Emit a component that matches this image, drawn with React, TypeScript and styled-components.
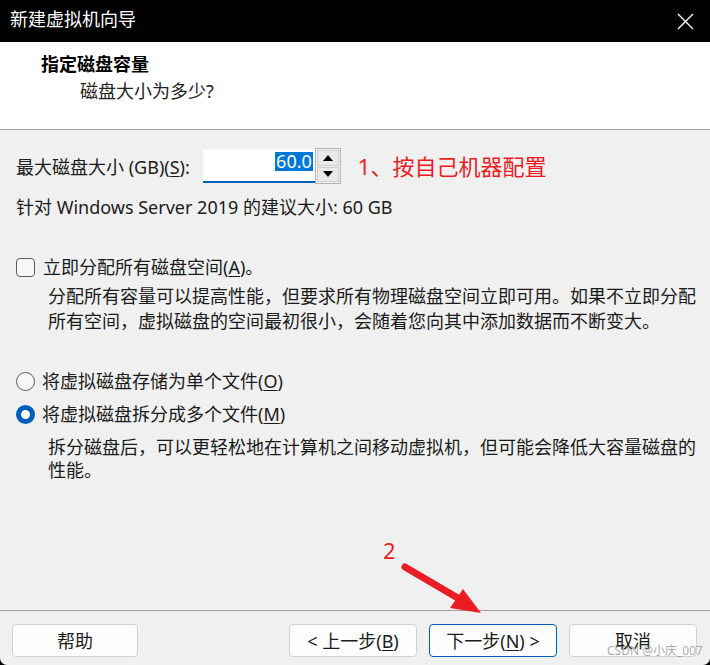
import React from "react";
import styled, { createGlobalStyle } from "styled-components";

const Global = createGlobalStyle`
  html, body { margin: 0; padding: 0; background: #000; }
  body { font-family: "Noto Sans", "Noto Sans CJK SC", sans-serif; }
`;

const FONT = `"Noto Sans", "Noto Sans CJK SC", sans-serif`;

const Window = styled.div`
  position: relative;
  width: 710px;
  height: 665px;
  background: #f0f0f0;
  border-radius: 0 0 7px 7px;
  overflow: hidden;
  display: flex;
  flex-direction: column;
  font-family: ${FONT};
  color: #1b1b1b;
`;

const TitleBar = styled.div`
  height: 42px;
  background: #000;
  display: flex;
  align-items: center;
  justify-content: space-between;
  padding: 0 16px 0 10px;
  box-sizing: border-box;
`;

const Title = styled.span`
  color: #fff;
  font-size: 18px;
  line-height: 22px;
  margin-top: -4px;
`;

const Header = styled.div`
  height: 88px;
  background: #fff;
  border-bottom: 1px solid #a0a0a0;
  padding: 11px 0 0 41px;
  box-sizing: border-box;
`;

const HeaderTitle = styled.div`
  font-size: 18px;
  font-weight: 700;
  line-height: 22px;
  color: #000;
`;

const HeaderSub = styled.div`
  font-size: 18px;
  line-height: 22px;
  margin: 5px 0 0 39px;
  color: #222;
`;

const Content = styled.div`
  flex: 1;
  padding: 19px 0 0 16px;
  display: flex;
  flex-direction: column;
`;

const SizeRow = styled.div`
  height: 35px;
  display: flex;
  align-items: center;
`;

const Label = styled.span`
  font-size: 18px;
  line-height: 22px;
`;

const Spin = styled.div`
  display: flex;
  margin-left: 13px;
  height: 35px;
`;

const Input = styled.div`
  width: 112px;
  height: 34px;
  box-sizing: border-box;
  background: #fff;
  border-bottom: 2px solid #005fb8;
  display: flex;
  justify-content: flex-end;
  align-items: flex-start;
  padding: 3px 2px 0 0;
`;

const Selected = styled.span`
  background: #0078d7;
  color: #fff;
  font-size: 18px;
  line-height: 19px;
  padding: 0 1px;
`;

const SpinButtons = styled.div`
  width: 26px;
  height: 36px;
  margin-top: -1px;
  box-sizing: border-box;
  border: 1px solid #b4b4b4;
  display: flex;
  flex-direction: column;
  gap: 1px;
  padding: 1px;
  background: #f0f0f0;
`;

const SpinBtn = styled.div`
  flex: 1;
  background: #e9e9e9;
  border: 1px solid #cfcfcf;
  display: flex;
  align-items: center;
  justify-content: center;
`;

const Note = styled.span`
  color: #ea1c24;
  font-size: 22px;
  line-height: 26px;
  margin-left: 17px;
  margin-top: -2px;
`;

const Recommend = styled.div`
  font-size: 18px;
  line-height: 22px;
  margin-top: 12px;
`;

const OptionRow = styled.div<{ $mt: number }>`
  display: flex;
  align-items: center;
  margin-top: ${(p) => p.$mt}px;
  height: 22px;
`;

const CheckBox = styled.span`
  width: 19px;
  height: 19px;
  box-sizing: border-box;
  border: 1.5px solid #5c5c5c;
  border-radius: 4px;
  margin-right: 8px;
  background: #f7f7f7;
  flex: none;
`;

const Radio = styled.span<{ $on?: boolean }>`
  width: 19px;
  height: 19px;
  box-sizing: border-box;
  border-radius: 50%;
  flex: none;
  margin-right: 7px;
  border: ${(p) => (p.$on ? "5.5px solid #005fb8" : "1.5px solid #5c5c5c")};
  background: ${(p) => (p.$on ? "#fff" : "#f7f7f7")};
`;

const OptLabel = styled.span`
  font-size: 18px;
  line-height: 22px;
  color: #1b1b1b;
`;

const Para = styled.p<{ $mt: number; $lh: number }>`
  margin: ${(p) => p.$mt}px 0 0 32px;
  width: 656px;
  font-size: 18px;
  letter-spacing: 0;
  line-height: ${(p) => p.$lh}px;
  color: #1b1b1b;
  line-break: anywhere;
`;

const U = styled.span`
  text-decoration: underline;
  text-underline-offset: 2px;
`;

const Footer = styled.div`
  height: 55px;
  border-top: 1px solid #a0a0a0;
  box-sizing: border-box;
  padding: 13px 13px 0 12px;
  display: flex;
  align-items: flex-start;
`;

const Spacer = styled.div`
  flex: 1;
`;

const Buttons = styled.div`
  display: flex;
  gap: 12px;
`;

const Button = styled.button<{ $primary?: boolean; $w: number }>`
  width: ${(p) => p.$w}px;
  height: 33px;
  box-sizing: border-box;
  border-radius: 4px;
  background: #fdfdfd;
  border: 1px solid ${(p) => (p.$primary ? "#005fb8" : "#d1d1d1")};
  font-family: ${FONT};
  font-size: 18px;
  color: #1b1b1b;
  padding: 0;
  display: flex;
  align-items: center;
  justify-content: center;
  line-height: 22px;
`;

const Annotation = styled.div`
  position: absolute;
  left: 380px;
  top: 538px;
  width: 110px;
  height: 80px;
  pointer-events: none;
`;

const Two = styled.span`
  position: absolute;
  left: 3px;
  top: 0;
  color: #ea1c24;
  font-family: "Noto Sans", sans-serif;
  font-size: 22px;
  line-height: 24px;
`;

const Watermark = styled.span`
  position: absolute;
  left: 607px;
  top: 643px;
  font-family: "Noto Sans", "Noto Sans CJK SC", sans-serif;
  font-size: 12px;
  line-height: 16px;
  color: rgba(140, 140, 140, 0.75);
  white-space: nowrap;
`;

export default function App() {
  return (
    <>
      <Global />
      <Window>
        <TitleBar>
          <Title>新建虚拟机向导</Title>
          <svg width="17" height="17" viewBox="0 0 17 17">
            <path d="M1 1 L16 16 M16 1 L1 16" stroke="#fff" strokeWidth="1.4" />
          </svg>
        </TitleBar>
        <Header>
          <HeaderTitle>指定磁盘容量</HeaderTitle>
          <HeaderSub>磁盘大小为多少?</HeaderSub>
        </Header>
        <Content>
          <SizeRow>
            <Label>
              最大磁盘大小 (GB)(<U>S</U>):
            </Label>
            <Spin>
              <Input>
                <Selected>60.0</Selected>
              </Input>
              <SpinButtons>
                <SpinBtn>
                  <svg width="10" height="6" viewBox="0 0 10 6">
                    <path d="M0 6 L5 0 L10 6 Z" fill="#000" />
                  </svg>
                </SpinBtn>
                <SpinBtn>
                  <svg width="10" height="6" viewBox="0 0 10 6">
                    <path d="M0 0 L10 0 L5 6 Z" fill="#000" />
                  </svg>
                </SpinBtn>
              </SpinButtons>
            </Spin>
            <Note>1、按自己机器配置</Note>
          </SizeRow>
          <Recommend>针对 Windows Server 2019 的建议大小: 60 GB</Recommend>
          <OptionRow $mt={38}>
            <CheckBox />
            <OptLabel>
              立即分配所有磁盘空间(<U>A</U>)。
            </OptLabel>
          </OptionRow>
          <Para $mt={6} $lh={25}>
            分配所有容量可以提高性能，但要求所有物理磁盘空间立即可用。如果不立即分配所有空间，虚拟磁盘的空间最初很小，会随着您向其中添加数据而不断变大。
          </Para>
          <OptionRow $mt={36}>
            <Radio />
            <OptLabel>
              将虚拟磁盘存储为单个文件(<U>O</U>)
            </OptLabel>
          </OptionRow>
          <OptionRow $mt={11}>
            <Radio $on />
            <OptLabel>
              将虚拟磁盘拆分成多个文件(<U>M</U>)
            </OptLabel>
          </OptionRow>
          <Para $mt={11} $lh={23}>
            拆分磁盘后，可以更轻松地在计算机之间移动虚拟机，但可能会降低大容量磁盘的性能。
          </Para>
        </Content>
        <Footer>
          <Button $w={126}>帮助</Button>
          <Spacer />
          <Buttons>
            <Button $w={128}>
              &lt; 上一步(<U>B</U>)
            </Button>
            <Button $w={128} $primary>
              下一步(<U>N</U>) &gt;
            </Button>
            <Button $w={128}>取消</Button>
          </Buttons>
        </Footer>
        <Annotation>
          <Two>2</Two>
          <svg width="110" height="80" viewBox="0 0 110 80">
            <path d="M25 29 L88 66" stroke="#ea1c24" strokeWidth="7" strokeLinecap="round" />
            <path d="M83 51 L101 75 L70 70 Z" fill="#ea1c24" />
          </svg>
        </Annotation>
        <Watermark>CSDN @小庆_007</Watermark>
      </Window>
    </>
  );
}
